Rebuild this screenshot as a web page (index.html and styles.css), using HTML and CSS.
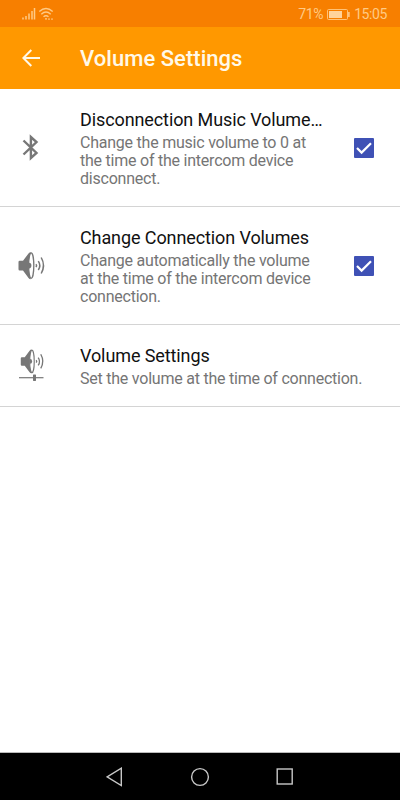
FILE: index.html
```html
<!DOCTYPE html>
<html lang="en">
<head>
<meta charset="utf-8">
<title>Volume Settings</title>
<link rel="stylesheet" href="styles.css">
</head>
<body>
<div class="screen">
  <div class="status">
    <svg class="signal" width="34" height="14" viewBox="0 0 34 14" fill="none" stroke="currentColor">
      <path d="M2 12.5v-2M5 12.5V9M8 12.5V6.5M11 12.5V4M13.5 12.5V1" stroke-width="1.5"/>
      <path d="M18.3 4.5Q25-1.5 31.7 4.5M20.3 7.2Q25 3 29.7 7.2M22.5 9.8Q25 7.7 27.5 9.8" stroke-width="1.4"/>
      <path d="M24 11.8h2M28 11.2v1.8M31 11.2v1.8" stroke-width="1.2"/>
    </svg>
    <span class="percent">71%</span>
    <svg class="battery" width="23" height="11" viewBox="0 0 23 11">
      <rect x=".5" y=".5" width="20" height="10" rx="1" fill="none" stroke="currentColor" stroke-width=".9"/>
      <path d="M2 2h13v7H2zM21.2 3H22.6v5H21.2z" fill="currentColor"/>
    </svg>
    <span class="clock">15:05</span>
  </div>
  <header class="appbar">
    <svg class="back" width="18" height="18" viewBox="0 0 18 18" fill="none" stroke="currentColor" stroke-width="2"><path d="M18 9H1.6M9.3 1L1.4 9l7.9 8"/></svg>
    <h1>Volume Settings</h1>
  </header>
  <main>
    <section class="row">
      <div class="icon"><svg width="50" height="45" viewBox="0 0 50 45" fill="none" stroke="currentColor" stroke-width="2.4"><path d="M13.5 15.5L26.5 28l-5.6 5V12l5.6 5-13 12.5"/></svg></div>
      <div class="text"><h2>Disconnection Music Volume…</h2><p>Change the music volume to 0 at<br>the time of the intercom device<br>disconnect.</p></div>
      <div class="check"><svg width="20" height="20" viewBox="0 0 20 20"><path d="M3 10l4.6 4.6L17 5.2" fill="none" stroke="#fff" stroke-width="2.2"/></svg></div>
    </section>
    <section class="row">
      <div class="icon"><svg width="50" height="45" viewBox="0 0 50 45"><use href="#speaker"/></svg></div>
      <div class="text"><h2>Change Connection Volumes</h2><p>Change automatically the volume<br>at the time of the intercom device<br>connection.</p></div>
      <div class="check"><svg width="20" height="20" viewBox="0 0 20 20"><path d="M3 10l4.6 4.6L17 5.2" fill="none" stroke="#fff" stroke-width="2.2"/></svg></div>
    </section>
    <section class="row short">
      <div class="icon"><svg width="50" height="45" viewBox="0 0 50 45">
        <g transform="translate(3.3 -1.5) scale(.88)"><g id="speaker">
          <path d="M8.5 19q0-1.2 1.2-1.2H13l5.5-7.3q1-1.3 2.2-1.3v27q-1.2 0-2.2-1.3L13 27.5H9.7q-1.2 0-1.2-1.2z" fill="currentColor"/>
          <ellipse cx="21.2" cy="22.6" rx="2.6" ry="12.8" fill="#fff" stroke="currentColor" stroke-width="1.3"/>
          <path d="M19 19.8q2.4 0 2.4 2.8t-2.4 2.8z" fill="currentColor"/>
          <path d="M26 21.1q1.2 1.5 0 3M28.3 18.2q3 4.4 0 8.8M31.2 14.5q4.6 8 0 16" fill="none" stroke="currentColor" stroke-width="1.5"/>
        </g></g>
        <path d="M9 34.7h24.5" stroke="currentColor" stroke-width="1.2"/><rect x="23" y="31.5" width="3" height="6.4" rx=".6" fill="currentColor"/>
      </svg></div>
      <div class="text"><h2>Volume Settings</h2><p>Set the volume at the time of connection.</p></div>
    </section>
  </main>
  <nav class="nav">
    <svg width="18" height="20" viewBox="0 0 18 20"><path d="M15.3 1.2v17.4L1.1 9.9z"/></svg>
    <svg width="20" height="20" viewBox="0 0 20 20"><circle cx="10" cy="10" r="8.4"/></svg>
    <svg width="18" height="18" viewBox="0 0 18 18"><rect x="1.2" y="1" width="15" height="15"/></svg>
  </nav>
</div>
</body>
</html>
```
FILE: styles.css
```css
* { box-sizing: border-box; }
body { margin: 0; background: #fff; font-family: Roboto, "Liberation Sans", sans-serif; }
svg { display: block; flex: none; }
h1, h2, p { margin: 0; white-space: nowrap; }
.screen { width: 400px; height: 800px; display: flex; flex-direction: column; }
.status { height: 27px; background: #f77f00; color: #ffca85; display: flex; align-items: center; padding: 1px 13px 0 21px; font-size: 14px; flex: none; }
.signal { margin-top: -1px; }
.percent { margin-left: auto; letter-spacing: -.4px; }
.battery { margin: 0 4px; }
.battery path { fill: #ffd39b; }
.clock { letter-spacing: -.4px; }
.appbar { height: 62px; flex: none; background: #ff9800; color: #fff9e8; display: flex; align-items: center; padding-left: 22px; }
.back { margin-right: 40px; }
.appbar h1 { font-size: 22px; line-height: 26px; font-weight: 500; margin-top: 1px; letter-spacing: .04px; }
main { flex: 1; border-bottom: 1px solid #bbb; }
.row { height: 118px; display: flex; align-items: center; border-bottom: 1px solid #d4d4d4; }
.short { height: 82px; }
.icon { width: 70px; margin-left: 10px; color: #777; }
.text { width: 274px; padding-top: 1px; }
.text h2 { font-size: 18px; line-height: 22px; font-weight: 400; color: #111; letter-spacing: -.1px; }
.text p { font-size: 16px; line-height: 18px; color: #757575; margin-top: 3px; letter-spacing: -.23px; }
.check { width: 20px; height: 20px; background: #3f51b5; border-radius: 1px; }
.nav { height: 47px; flex: none; background: #000; display: flex; align-items: center; justify-content: space-between; padding: 0 106px; }
.nav svg { fill: none; stroke: #c8c8c8; stroke-width: 1.4; }
```
